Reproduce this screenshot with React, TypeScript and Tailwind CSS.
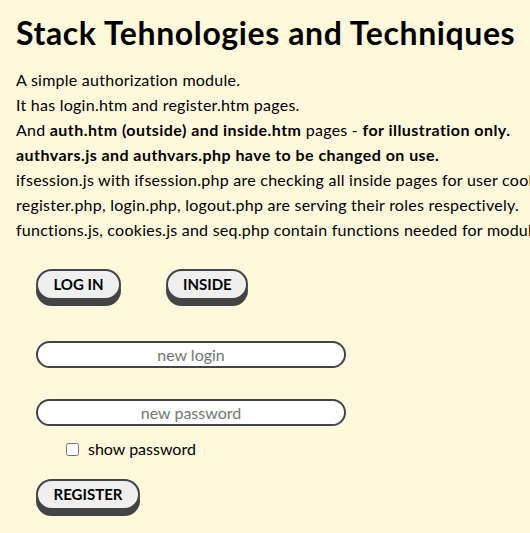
import { useState } from "react"

const B = ({ children }: { children: React.ReactNode }) => (
  <b className="tracking-[0.45px]">{children}</b>
)

const lines = [
  <>A simple authorization module.</>,
  <>It has login.htm and register.htm pages.</>,
  <>
    And <B>auth.htm (outside) and inside.htm</B> pages - <B>for illustration only.</B>
  </>,
  <>
    <B>authvars.js and authvars.php have to be changed on use.</B>
  </>,
  <>ifsession.js with ifsession.php are checking all inside pages for user cookies.</>,
  <>register.php, login.php, logout.php are serving their roles respectively.</>,
  <>functions.js, cookies.js and seq.php contain functions needed for module.</>,
]

function RoundButton({ children, className }: { children: React.ReactNode; className?: string }) {
  return (
    <button
      className={
        "h-[31px] rounded-full border-2 border-[#444] bg-[#efefef] px-[15px] text-[15px] font-bold text-black shadow-[0_6px_0_#444] " +
        (className ?? "")
      }
    >
      {children}
    </button>
  )
}

export default function App() {
  const [showPassword, setShowPassword] = useState(false)

  return (
    <div className="min-h-screen overflow-hidden bg-[#fff8dc] px-4 font-['Lato','Liberation_Sans',sans-serif] text-black">
      <h1 className="pt-[14px] text-[32px] font-bold leading-[38px] tracking-[0.6px] whitespace-nowrap">
        Stack Tehnologies and Techniques
      </h1>

      <div className="mt-[15px] text-base leading-[25px] tracking-[0.25px] whitespace-nowrap">
        {lines.map((line, i) => (
          <p key={i}>{line}</p>
        ))}
      </div>

      <div className="mt-[27px] ml-5 flex gap-[45px]">
        <RoundButton className="w-[85px]">LOG IN</RoundButton>
        <RoundButton className="w-[82px]">INSIDE</RoundButton>
      </div>

      <form className="ml-5 mt-[41px] flex flex-col" onSubmit={(e) => e.preventDefault()}>
        <input
          type="text"
          placeholder="new login"
          className="h-[27px] w-[310px] rounded-full border-2 border-[#444] bg-white text-center text-base placeholder:text-[#757575] outline-none"
        />
        <input
          type={showPassword ? "text" : "password"}
          placeholder="new password"
          className="mt-[31px] h-[27px] w-[310px] rounded-full border-2 border-[#444] bg-white text-center text-base placeholder:text-[#757575] outline-none"
        />
        <label className="mt-[12px] ml-[30px] flex items-center gap-[9px] text-base leading-[22px]">
          <input
            type="checkbox"
            checked={showPassword}
            onChange={(e) => setShowPassword(e.target.checked)}
            className="h-[13px] w-[13px]"
          />
          show password
        </label>
        <div className="mt-[19px]">
          <RoundButton className="w-[104px]">REGISTER</RoundButton>
        </div>
      </form>
    </div>
  )
}
